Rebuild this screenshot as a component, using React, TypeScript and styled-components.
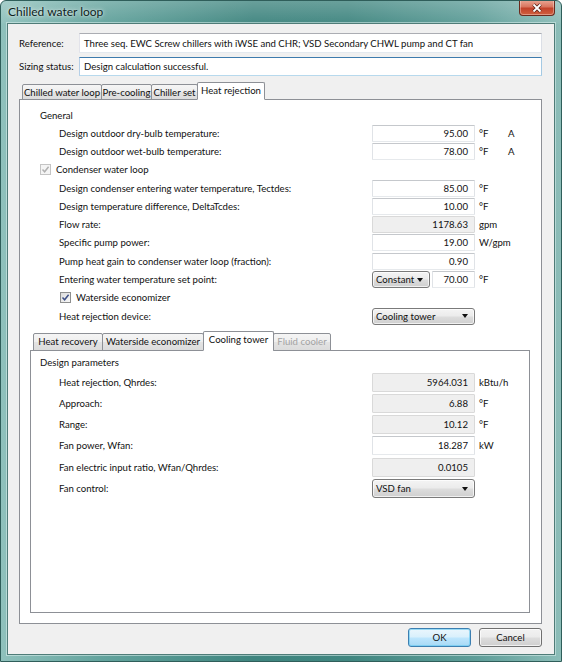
import React from 'react';
import styled, { createGlobalStyle, css } from 'styled-components';

const GlobalStyle = createGlobalStyle`
  html, body {
    margin: 0;
    padding: 0;
    background: #ffffff;
  }
  body {
    font-family: Lato, 'Liberation Sans', Arial, sans-serif;
    font-size: 9.6px;
    color: #111;
  }
`;

const Window = styled.div`
  width: 562px;
  height: 662px;
  box-sizing: border-box;
  display: flex;
  flex-direction: column;
  border: 1px solid #2f5e5a;
  border-radius: 6px 6px 0 0;
  overflow: hidden;
  background:
    linear-gradient(180deg, rgba(255, 255, 255, 0.22) 0px, rgba(255, 255, 255, 0.04) 22px, rgba(0, 0, 0, 0) 23px),
    linear-gradient(90deg, #8fc1bc 0%, #63a39d 18%, #3f857f 45%, #408680 62%, #5f9e99 85%, #8cbdb8 100%);
`;

const TitleBar = styled.div`
  height: 22px;
  flex: none;
  display: flex;
  justify-content: space-between;
  align-items: flex-start;
  padding: 0 6px 0 7px;
`;

const Title = styled.div`
  font-size: 12px;
  line-height: 22px;
  color: #0c1d1c;
  text-shadow: 0 0 5px rgba(255, 255, 255, 0.8), 0 0 2px rgba(255, 255, 255, 0.6);
`;

const CloseButton = styled.div`
  width: 36px;
  height: 16px;
  margin-top: -1px;
  box-sizing: border-box;
  border: 1px solid #6b2a1d;
  border-top: none;
  border-radius: 0 0 4px 4px;
  display: flex;
  align-items: center;
  justify-content: center;
  background: linear-gradient(180deg, #e9a896 0%, #d9765f 45%, #c2432b 55%, #d0603f 100%);
  box-shadow: inset 0 0 0 1px rgba(255, 255, 255, 0.35);
`;

const Client = styled.div`
  flex: 1;
  margin: 0 6px 6px;
  border: 1px solid #4f7c78;
  background: #f0f0f0;
  display: flex;
  flex-direction: column;
  padding: 9px 12px 7px 11px;
  box-shadow: 0 0 0 1px rgba(220, 240, 238, 0.55);
`;

const FieldRow = styled.div<{ $h: number; $gap?: number }>`
  display: flex;
  align-items: center;
  height: ${p => p.$h}px;
  margin-top: ${p => p.$gap ?? 0}px;
`;

const FieldLabel = styled.div`
  width: 60px;
  flex: none;
`;

const TextBox = styled.div<{ $focus?: boolean }>`
  flex: 1;
  height: 100%;
  box-sizing: border-box;
  display: flex;
  align-items: center;
  padding: 0 4px;
  background: #fff;
  border: 1px solid;
  border-color: #abadb3 #dbdfe6 #e3e9ef #e2e3ea;
  ${p =>
    p.$focus &&
    css`
      border-color: #3d7bad #a4c9e3 #b7d9ed #b5cfe7;
    `}
`;

const TabStrip = styled.div<{ $h: number; $left: number; $top: number }>`
  display: flex;
  align-items: flex-end;
  height: ${p => p.$h}px;
  padding-left: ${p => p.$left}px;
  margin-top: ${p => p.$top}px;
  margin-bottom: -1px;
  position: relative;
  z-index: 1;
  flex: none;
`;

const Tab = styled.div<{ $w: number; $active?: boolean; $disabled?: boolean }>`
  width: ${p => p.$w}px;
  height: ${p => (p.$active ? '100%' : 'calc(100% - 2px)')};
  box-sizing: border-box;
  margin-left: -1px;
  display: flex;
  align-items: center;
  justify-content: center;
  white-space: nowrap;
  border: 1px solid #8d9096;
  border-bottom-color: ${p => (p.$active ? '#fff' : '#8d9096')};
  border-radius: 2px 2px 0 0;
  background: ${p => (p.$active ? '#fff' : 'linear-gradient(180deg, #f5f5f5 0%, #eeeeee 50%, #e3e3e3 52%, #dcdcdc 100%)')};
  color: ${p => (p.$disabled ? '#a3a3a3' : '#111')};
  padding-bottom: ${p => (p.$active ? 2 : 0)}px;
  &:first-child {
    margin-left: 0;
  }
`;

const Panel = styled.div<{ $pad: string }>`
  flex: 1;
  display: flex;
  flex-direction: column;
  border: 1px solid #8d9096;
  background: #fff;
  padding: ${p => p.$pad};
`;

const TabGroup = styled.div<{ $ml?: number }>`
  flex: 1;
  display: flex;
  flex-direction: column;
  margin-left: ${p => p.$ml ?? 0}px;
`;

const Heading = styled.div<{ $h: number }>`
  height: ${p => p.$h}px;
  display: flex;
  align-items: center;
  flex: none;
`;

const Row = styled.div<{ $h: number }>`
  height: ${p => p.$h}px;
  display: flex;
  align-items: center;
  flex: none;
`;

const Label = styled.div`
  margin-left: 19px;
  width: 313px;
  flex: none;
  white-space: nowrap;
`;

const Input = styled.div<{ $w?: number; $h: number; $readOnly?: boolean }>`
  width: ${p => p.$w ?? 103}px;
  height: ${p => p.$h}px;
  box-sizing: border-box;
  flex: none;
  display: flex;
  align-items: center;
  justify-content: flex-end;
  padding-right: 6px;
  background: ${p => (p.$readOnly ? '#efefef' : '#fff')};
  border: 1px solid;
  border-color: ${p => (p.$readOnly ? '#d9d9d9' : '#c5c8cc #e0e3e7 #e6e9ec #e0e3e7')};
  border-radius: 1px;
`;

const Select = styled.div<{ $w?: number; $h: number }>`
  width: ${p => p.$w ?? 103}px;
  height: ${p => p.$h}px;
  box-sizing: border-box;
  flex: none;
  display: flex;
  align-items: center;
  justify-content: space-between;
  padding: 0 6px 0 3px;
  border: 1px solid #7a7a7a;
  border-radius: 3px;
  background: linear-gradient(180deg, #f4f4f4 0%, #ebebeb 48%, #dddddd 52%, #cfcfcf 100%);
  box-shadow: inset 0 0 0 1px rgba(255, 255, 255, 0.7);
`;

const Arrow = styled.span`
  width: 0;
  height: 0;
  border-left: 3.5px solid transparent;
  border-right: 3.5px solid transparent;
  border-top: 4px solid #111;
`;

const Unit = styled.div`
  margin-left: 4px;
  width: 29px;
  flex: none;
  white-space: nowrap;
`;

const Gap = styled.div<{ $w: number }>`
  width: ${p => p.$w}px;
  flex: none;
`;

const CheckRow = styled.div<{ $h: number; $ml: number }>`
  height: ${p => p.$h}px;
  display: flex;
  align-items: center;
  flex: none;
  margin-left: ${p => p.$ml}px;
`;

const Box = styled.span<{ $disabled?: boolean }>`
  width: 11px;
  height: 11px;
  box-sizing: border-box;
  margin-right: 5px;
  display: inline-flex;
  align-items: center;
  justify-content: center;
  border: 1px solid ${p => (p.$disabled ? '#c4c4c4' : '#8e8f8f')};
  background: ${p => (p.$disabled ? '#f4f4f4' : 'linear-gradient(135deg, #dcdcdc 0%, #f8f8f8 100%)')};
`;

const ButtonBar = styled.div`
  display: flex;
  justify-content: flex-end;
  gap: 8px;
  margin-top: 4px;
  flex: none;
`;

const DlgButton = styled.div<{ $default?: boolean }>`
  width: 63px;
  height: 19px;
  box-sizing: border-box;
  display: flex;
  align-items: center;
  justify-content: center;
  border-radius: 3px;
  border: 1px solid ${p => (p.$default ? '#3c7fb1' : '#707070')};
  background: ${p =>
    p.$default
      ? 'linear-gradient(180deg, #eaf6fd 0%, #d9f0fc 48%, #bee6fd 52%, #a7d9f5 100%)'
      : 'linear-gradient(180deg, #f2f2f2 0%, #ebebeb 48%, #dddddd 52%, #cfcfcf 100%)'};
  box-shadow: inset 0 0 0 1px ${p => (p.$default ? 'rgba(100, 200, 240, 0.6)' : 'rgba(255, 255, 255, 0.7)')};
`;

const Check = ({ color }: { color: string }) => (
  <svg width="9" height="9" viewBox="0 0 9 9">
    <path d="M1.5 4.6 L3.6 6.8 L7.6 1.8" fill="none" stroke={color} strokeWidth="1.5" />
  </svg>
);

type ParamProps = {
  label: string;
  h: number;
  ih: number;
  value: string;
  unit?: string;
  flag?: string;
  readOnly?: boolean;
};

const Param = ({ label, h, ih, value, unit, flag, readOnly }: ParamProps) => (
  <Row $h={h}>
    <Label>{label}</Label>
    <Input $h={ih} $readOnly={readOnly}>
      {value}
    </Input>
    {unit && <Unit>{unit}</Unit>}
    {flag && <span>{flag}</span>}
  </Row>
);

const TOP = 18.3;
const TOP_IN = 17;
const LOW = 21.3;
const LOW_IN = 19;

export default function App() {
  return (
    <>
      <GlobalStyle />
      <Window>
        <TitleBar>
          <Title>Chilled water loop</Title>
          <CloseButton>
            <svg width="12" height="10" viewBox="0 0 12 10">
              <path d="M2.5 1.5 L9.5 8.5 M9.5 1.5 L2.5 8.5" stroke="#5a2418" strokeWidth="3.4" />
              <path d="M2.5 1.5 L9.5 8.5 M9.5 1.5 L2.5 8.5" stroke="#fff" strokeWidth="1.8" />
            </svg>
          </CloseButton>
        </TitleBar>
        <Client>
          <FieldRow $h={20}>
            <FieldLabel>Reference:</FieldLabel>
            <TextBox>Three seq. EWC Screw chillers with iWSE and CHR; VSD Secondary CHWL pump and CT fan</TextBox>
          </FieldRow>
          <FieldRow $h={19} $gap={4}>
            <FieldLabel>Sizing status:</FieldLabel>
            <TextBox $focus>Design calculation successful.</TextBox>
          </FieldRow>

          <TabGroup>
            <TabStrip $h={18} $left={3} $top={6}>
              <Tab $w={80}>Chilled water loop</Tab>
              <Tab $w={51}>Pre-cooling</Tab>
              <Tab $w={47}>Chiller set</Tab>
              <Tab $w={68} $active>
                Heat rejection
              </Tab>
            </TabStrip>
            <Panel $pad="6px 11px 10px 20px">
              <Heading $h={18}>General</Heading>
              <Param label="Design outdoor dry-bulb temperature:" h={TOP} ih={TOP_IN} value="95.00" unit="°F" flag="A" />
              <Param label="Design outdoor wet-bulb temperature:" h={TOP} ih={TOP_IN} value="78.00" unit="°F" flag="A" />
              <CheckRow $h={TOP} $ml={0}>
                <Box $disabled>
                  <Check color="#b0b0b0" />
                </Box>
                Condenser water loop
              </CheckRow>
              <Param label="Design condenser entering water temperature, Tectdes:" h={TOP} ih={TOP_IN} value="85.00" unit="°F" />
              <Param label="Design temperature difference, DeltaTcdes:" h={TOP} ih={TOP_IN} value="10.00" unit="°F" />
              <Param label="Flow rate:" h={TOP} ih={TOP_IN} value="1178.63" unit="gpm" readOnly />
              <Param label="Specific pump power:" h={TOP} ih={TOP_IN} value="19.00" unit="W/gpm" />
              <Param label="Pump heat gain to condenser water loop (fraction):" h={TOP} ih={TOP_IN} value="0.90" />
              <Row $h={TOP}>
                <Label>Entering water temperature set point:</Label>
                <Select $w={58} $h={TOP_IN}>
                  Constant
                  <Arrow />
                </Select>
                <Gap $w={2} />
                <Input $w={43} $h={TOP_IN}>
                  70.00
                </Input>
                <Unit>°F</Unit>
              </Row>
              <CheckRow $h={TOP} $ml={20}>
                <Box>
                  <Check color="#3d4f86" />
                </Box>
                Waterside economizer
              </CheckRow>
              <Row $h={TOP}>
                <Label>Heat rejection device:</Label>
                <Select $h={TOP_IN}>
                  Cooling tower
                  <Arrow />
                </Select>
              </Row>

              <TabGroup $ml={-10}>
                <TabStrip $h={20} $left={3} $top={5.7}>
                  <Tab $w={70}>Heat recovery</Tab>
                  <Tab $w={102}>Waterside economizer</Tab>
                  <Tab $w={71} $active>
                    Cooling tower
                  </Tab>
                  <Tab $w={58} $disabled>
                    Fluid cooler
                  </Tab>
                </TabStrip>
                <Panel $pad="3px 0 0 9px">
                  <Heading $h={17.5}>Design parameters</Heading>
                  <Param label="Heat rejection, Qhrdes:" h={LOW} ih={LOW_IN} value="5964.031" unit="kBtu/h" readOnly />
                  <Param label="Approach:" h={LOW} ih={LOW_IN} value="6.88" unit="°F" readOnly />
                  <Param label="Range:" h={LOW} ih={LOW_IN} value="10.12" unit="°F" readOnly />
                  <Param label="Fan power, Wfan:" h={LOW} ih={LOW_IN} value="18.287" unit="kW" />
                  <Param label="Fan electric input ratio, Wfan/Qhrdes:" h={LOW} ih={LOW_IN} value="0.0105" readOnly />
                  <Row $h={LOW}>
                    <Label>Fan control:</Label>
                    <Select $h={LOW_IN}>
                      VSD fan
                      <Arrow />
                    </Select>
                  </Row>
                </Panel>
              </TabGroup>
            </Panel>
          </TabGroup>

          <ButtonBar>
            <DlgButton $default>OK</DlgButton>
            <DlgButton>Cancel</DlgButton>
          </ButtonBar>
        </Client>
      </Window>
    </>
  );
}
